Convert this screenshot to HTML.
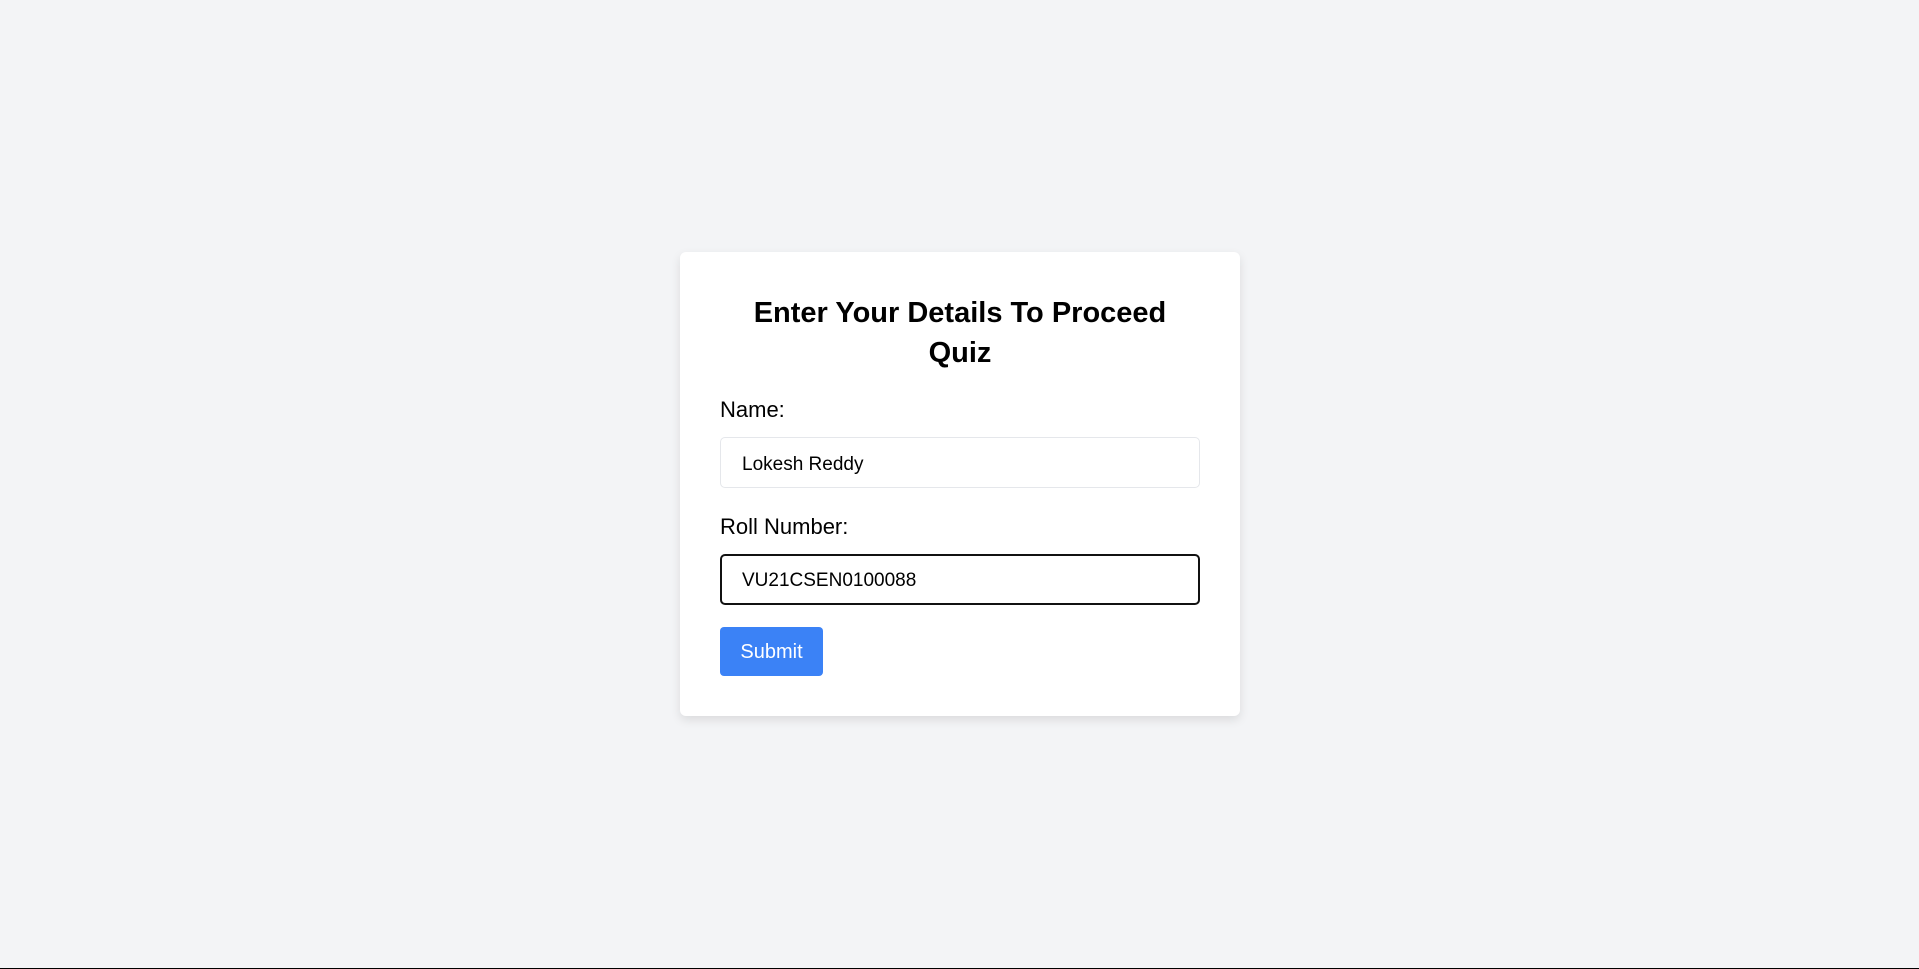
<!DOCTYPE html>
<html><head><style>
html,body{margin:0;padding:0;}
body{width:1919px;height:969px;background:#f3f4f6;position:relative;overflow:hidden;font-family:"Segoe UI","Liberation Sans",sans-serif;color:#000;}
.card{position:absolute;left:680px;top:252px;width:560px;height:464px;background:#fff;border-radius:6px;box-shadow:0 4px 10px rgba(0,0,0,0.1);}
h1{position:absolute;left:0;width:560px;top:41px;margin:0;text-align:center;font-size:29px;line-height:40px;font-weight:bold;}
.lbl{position:absolute;left:40px;font-size:22px;line-height:28px;}
.inp{position:absolute;left:40px;width:480px;height:51px;box-sizing:border-box;border:1px solid #e5e7eb;border-radius:5px;font-size:19px;line-height:49px;padding-left:21px;padding-top:2px;}
.inp.f{border:2px solid #111;line-height:45px;padding-left:20px;}
.btn{position:absolute;left:40px;top:375px;width:103px;height:49px;background:#3b82f6;border-radius:4px;color:#fff;font-size:20px;line-height:50px;text-align:center;}
.bar{position:absolute;left:0;bottom:0;width:1919px;height:1px;background:#000;}
</style></head><body>
<div class="card">
<h1>Enter Your Details To Proceed<br>Quiz</h1>
<div class="lbl" style="top:144px">Name:</div>
<div class="inp" style="top:185px">Lokesh Reddy</div>
<div class="lbl" style="top:261px">Roll Number:</div>
<div class="inp f" style="top:302px">VU21CSEN0100088</div>
<div class="btn">Submit</div>
</div>
<div class="bar"></div>
</body></html>
